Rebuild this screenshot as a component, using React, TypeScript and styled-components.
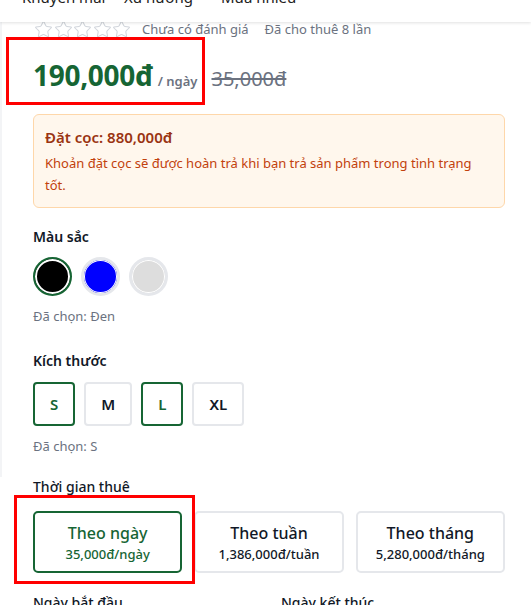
import styled, { createGlobalStyle } from 'styled-components'
import { Star } from 'lucide-react'

const GlobalStyle = createGlobalStyle`
  html, body {
    margin: 0;
    padding: 0;
    background: #ffffff;
    font-family: 'Noto Sans', 'Open Sans', sans-serif;
    color: #111827;
    overflow: hidden;
  }
  * {
    box-sizing: border-box;
  }
`

const Page = styled.div`
  width: 531px;
  height: 605px;
  overflow: hidden;
  position: relative;
`
const Header = styled.header`
  height: 22px;
  position: relative;
  z-index: 2;
  background: #ffffff;
  box-shadow: 0 1px 3px rgba(0, 0, 0, 0.12);
  overflow: hidden;
`
const HeaderNav = styled.nav`
  display: flex;
  padding-left: 22px;
  margin-top: -14px;
`
const HeaderLink = styled.a<{ $w: number }>`
  font-size: 15px;
  line-height: 22px;
  color: #222;
  width: ${({ $w }) => $w}px;
`
const Info = styled.div`
  border-left: 2px solid #f3f4f6;
  padding: 0 26px 22px 31px;
`
const RatingRow = styled.div`
  display: flex;
  align-items: center;
  height: 18px;
  margin-top: -2px;
  padding-left: 1px;
  gap: 10px;
  font-size: 13px;
  color: #6b7280;
`
const Stars = styled.div`
  display: flex;
  gap: 0.5px;
  color: #d1d5db;
  margin-right: 1px;
`
const RatingNote = styled.span`
  margin-right: 6px;
`
const PriceRow = styled.div`
  display: flex;
  align-items: baseline;
  gap: 5px;
  height: 67px;
  padding-top: 18px;
  position: relative;
`
const Highlight = styled.div<{ $top: number; $left: number; $w: number; $h: number }>`
  position: absolute;
  top: ${({ $top }) => $top}px;
  left: ${({ $left }) => $left}px;
  width: ${({ $w }) => $w}px;
  height: ${({ $h }) => $h}px;
  border: 3px solid #ff0000;
  pointer-events: none;
`
const Price = styled.span`
  font-size: 28px;
  font-weight: 700;
  color: #166534;
  letter-spacing: -0.3px;
`
const Unit = styled.span`
  font-size: 13px;
  font-weight: 600;
  color: #6b7280;
`
const OldPrice = styled.span`
  margin-left: 9px;
  font-size: 20px;
  color: #6b7280;
  text-decoration: line-through;
`
const Deposit = styled.div`
  margin-top: 9px;
  background: #fff7ed;
  border: 1px solid #fed7aa;
  border-radius: 6px;
  padding: 11px 11px 11px;
`
const DepositTitle = styled.div`
  font-size: 15px;
  font-weight: 600;
  line-height: 22px;
  color: #9a3412;
  margin-bottom: 4px;
`
const DepositText = styled.div`
  font-size: 13px;
  line-height: 22px;
  color: #c2410c;
`
const Group = styled.div<{ $mt: number }>`
  margin-top: ${({ $mt }) => $mt}px;
`
const Label = styled.div<{ $weight?: number }>`
  font-size: 14px;
  font-weight: ${({ $weight }) => $weight ?? 600};
  line-height: 20px;
  color: #111827;
`
const Swatches = styled.div`
  display: flex;
  gap: 9px;
  margin-top: 10px;
`
const Swatch = styled.button<{ $color: string; $active?: boolean }>`
  width: 39px;
  height: 39px;
  border-radius: 50%;
  padding: 0;
  background: ${({ $color }) => $color};
  border: ${({ $active }) => ($active ? '2px solid #166534' : '3px solid #e5e7eb')};
  box-shadow: inset 0 0 0 ${({ $active }) => ($active ? 2 : 1)}px #ffffff;
  cursor: pointer;
`
const Chosen = styled.div`
  margin-top: 11px;
  font-size: 13px;
  line-height: 18px;
  color: #6b7280;
`
const Sizes = styled.div`
  display: flex;
  gap: 9px;
  margin-top: 11px;
`
const SizeButton = styled.button<{ $active?: boolean }>`
  min-width: 42px;
  height: 44px;
  padding: 0 15px;
  background: #ffffff;
  border: 2px solid ${({ $active }) => ($active ? '#166534' : '#e5e7eb')};
  border-radius: 4px;
  font-family: inherit;
  font-size: 15px;
  font-weight: 600;
  color: ${({ $active }) => ($active ? '#166534' : '#111827')};
  cursor: pointer;
`
const Rental = styled.div`
  padding: 0 26px 0 33px;
  position: relative;
`
const Plans = styled.div`
  display: grid;
  grid-template-columns: repeat(3, 1fr);
  gap: 12px;
  margin-top: 14px;
`
const Plan = styled.button<{ $active?: boolean }>`
  height: 62px;
  background: #ffffff;
  border: 2px solid ${({ $active }) => ($active ? '#166534' : '#e5e7eb')};
  border-radius: 5px;
  font-family: inherit;
  color: ${({ $active }) => ($active ? '#166534' : '#111827')};
  display: flex;
  flex-direction: column;
  align-items: center;
  justify-content: center;
  gap: 1px;
  cursor: pointer;
`
const PlanName = styled.span`
  font-size: 16px;
  font-weight: 500;
  line-height: 22px;
`
const PlanPrice = styled.span`
  font-size: 13px;
  font-weight: 500;
  line-height: 18px;
`
const Dates = styled.div`
  display: grid;
  grid-template-columns: 1fr 1fr;
  gap: 24px;
  margin-top: 20px;
`

export default function App() {
  return (
    <Page>
      <GlobalStyle />
      <Header>
        <HeaderNav>
          <HeaderLink $w={102}>Khuyến mãi</HeaderLink>
          <HeaderLink $w={97}>Xu hướng</HeaderLink>
          <HeaderLink $w={102}>Mua nhiều</HeaderLink>
        </HeaderNav>
      </Header>
      <Info>
        <RatingRow>
          <Stars>
            {[0, 1, 2, 3, 4].map(i => (
              <Star key={i} size={19} strokeWidth={1.3} />
            ))}
          </Stars>
          <RatingNote>Chưa có đánh giá</RatingNote>
          <span>Đã cho thuê 8 lần</span>
        </RatingRow>
        <PriceRow>
          <Highlight $top={-1} $left={-27} $w={199} $h={68} />
          <Price>190,000đ</Price>
          <Unit>/ ngày</Unit>
          <OldPrice>35,000đ</OldPrice>
        </PriceRow>
        <Deposit>
          <DepositTitle>Đặt cọc: 880,000đ</DepositTitle>
          <DepositText>Khoản đặt cọc sẽ được hoàn trả khi bạn trả sản phẩm trong tình trạng tốt.</DepositText>
        </Deposit>
        <Group $mt={19}>
          <Label>Màu sắc</Label>
          <Swatches>
            <Swatch $color="#000000" $active aria-label="Đen" />
            <Swatch $color="#0000ff" aria-label="Xanh" />
            <Swatch $color="#dddddd" aria-label="Xám" />
          </Swatches>
          <Chosen>Đã chọn: Đen</Chosen>
        </Group>
        <Group $mt={26}>
          <Label>Kích thước</Label>
          <Sizes>
            <SizeButton $active>S</SizeButton>
            <SizeButton>M</SizeButton>
            <SizeButton $active>L</SizeButton>
            <SizeButton>XL</SizeButton>
          </Sizes>
          <Chosen>Đã chọn: S</Chosen>
        </Group>
      </Info>
      <Rental>
        <Label $weight={500}>Thời gian thuê</Label>
        <Highlight $top={18} $left={14} $w={181} $h={89} />
        <Plans>
          <Plan $active>
            <PlanName>Theo ngày</PlanName>
            <PlanPrice>35,000đ/ngày</PlanPrice>
          </Plan>
          <Plan>
            <PlanName>Theo tuần</PlanName>
            <PlanPrice>1,386,000đ/tuần</PlanPrice>
          </Plan>
          <Plan>
            <PlanName>Theo tháng</PlanName>
            <PlanPrice>5,280,000đ/tháng</PlanPrice>
          </Plan>
        </Plans>
        <Dates>
          <Label $weight={500}>Ngày bắt đầu</Label>
          <Label $weight={500}>Ngày kết thúc</Label>
        </Dates>
      </Rental>
    </Page>
  )
}
